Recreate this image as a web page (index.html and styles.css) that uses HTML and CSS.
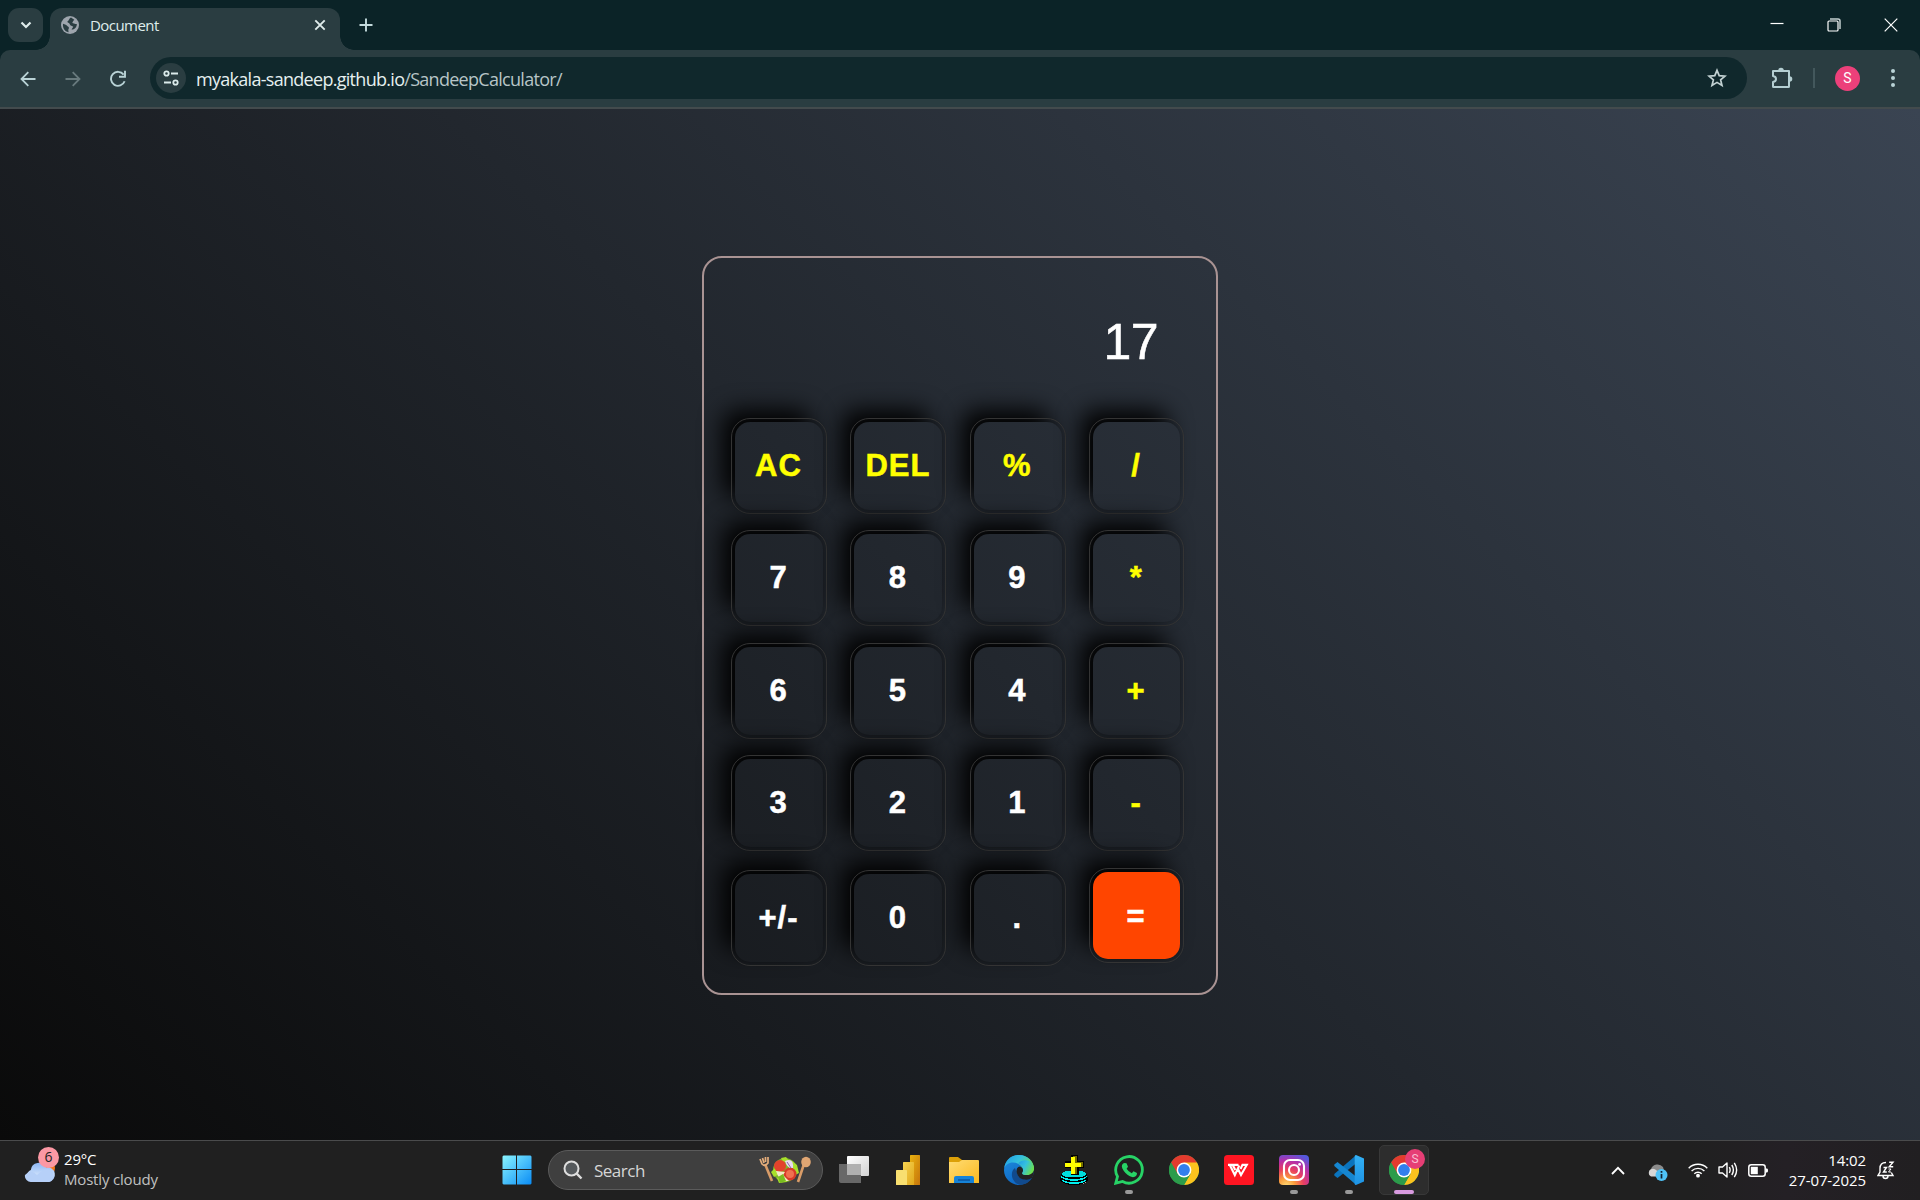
FILE: index.html
```html
<!DOCTYPE html>
<html lang="en">
<head>
<meta charset="utf-8">
<title>Document</title>
<link rel="stylesheet" href="styles.css">
</head>
<body>
<svg class="defs" width="0" height="0">
  <defs>
    <linearGradient id="win" x1="0" y1="0" x2="1" y2="1"><stop offset="0" stop-color="#8af5ff"/><stop offset="1" stop-color="#0a8cf5"/></linearGradient>
    <linearGradient id="edgeA" x1="0" y1="0" x2="1" y2=".5"><stop offset="0" stop-color="#1f9be8"/><stop offset=".5" stop-color="#35c1dd"/><stop offset="1" stop-color="#6be04e"/></linearGradient>
    <linearGradient id="edgeB" x1="0" y1="0" x2=".6" y2="1"><stop offset="0" stop-color="#1f8fe0"/><stop offset="1" stop-color="#0c62c0"/></linearGradient>
    <linearGradient id="fold" x1="0" y1="0" x2="1" y2="1"><stop offset="0" stop-color="#ffdc74"/><stop offset="1" stop-color="#fbb91f"/></linearGradient>
    <linearGradient id="cloud" x1="0" y1="0" x2="0" y2="1"><stop offset="0" stop-color="#8db6f4"/><stop offset=".6" stop-color="#c9defb"/><stop offset="1" stop-color="#94b4ee"/></linearGradient>
    <linearGradient id="vs" x1="0" y1="0" x2="0" y2="1"><stop offset="0" stop-color="#33b1f5"/><stop offset="1" stop-color="#1e93e4"/></linearGradient>
    <linearGradient id="pb1" x1="0" y1="0" x2="1" y2="1"><stop offset="0" stop-color="#eab310"/><stop offset="1" stop-color="#c4730c"/></linearGradient>
    <linearGradient id="pb2" x1="0" y1="0" x2="1" y2="1"><stop offset="0" stop-color="#f6d351"/><stop offset="1" stop-color="#e0a81b"/></linearGradient>
    <linearGradient id="tv" x1="0" y1="0" x2="1" y2="1"><stop offset="0" stop-color="#fff"/><stop offset="1" stop-color="#d2d2d2"/></linearGradient>
    <radialGradient id="ig" cx=".25" cy="1.05" r="1.15"><stop offset="0" stop-color="#ffe07a"/><stop offset=".25" stop-color="#fb9c3c"/><stop offset=".5" stop-color="#e9405f"/><stop offset=".75" stop-color="#b72fa8"/><stop offset="1" stop-color="#5558dc"/></radialGradient>
    <symbol id="chrome" viewBox="0 0 30 30">
      <circle cx="15" cy="15" r="15" fill="#2c9c4b"/>
      <path d="M15 15 2 7.500A15 15 0 0 1 28 7.500Z" fill="#e33b2e"/>
      <path d="M15 7.500H28A15 15 0 0 1 15 30L21.500 18.800Z" fill="#fcc31e"/>
      <path d="M2 7.500 8.500 18.800 15 14 15 7.500Z" fill="#e33b2e"/>
      <path d="M2 7.500 8.500 18.800 15 22.500 15 30A15 15 0 0 1 2 7.500Z" fill="#2c9c4b"/>
      <path d="M8.500 18.700 15 22.500 21.500 18.700 15 30Z" fill="#2c9c4b"/>
      <circle cx="15" cy="15" r="7.400" fill="#fff"/><circle cx="15" cy="15" r="5.900" fill="#327fee"/>
    </symbol>
  </defs>
</svg>

<div class="tabstrip">
  <div class="tab-search"><svg width="12" height="12" viewBox="0 0 12 12"><path d="M1.500 3.500 6 8 10.500 3.500" fill="none" stroke="#dfeceb" stroke-width="2.200"/></svg></div>
  <div class="tab">
    <svg width="18" height="18" viewBox="0 0 18 18"><circle cx="9" cy="9" r="9" fill="#9ea5ad"/><path d="M10 1.500C7.500 3 8.300 4.500 6.500 5.300 6 7 8.500 6.700 8.800 8.200 9 10 11.500 9.500 12.300 10.800L10.500 13.500C13.500 14 16 11 15.800 8 14.500 8.400 13.800 7.500 12 7.300 10.500 6.500 12.600 4.700 13.300 3.700Z M2 7.700C3.800 8.700 6 8.700 6.500 10.300 7.800 11 8.500 12 7.500 13 7 14 7.600 15.500 7.600 16.200 3.500 15.500 1.500 11.500 2 7.700Z" fill="#2a3d41"/></svg>
    <span class="tab-title">Document</span>
    <svg width="12" height="12" viewBox="0 0 12 12"><path d="M1.300 1.300 10.700 10.700M10.700 1.300 1.300 10.700" stroke="#dfeceb" stroke-width="1.900"/></svg>
  </div>
  <svg class="new-tab" width="14" height="14" viewBox="0 0 14 14"><path d="M7 .5V13.500M.5 7H13.500" stroke="#c3dadc" stroke-width="1.900"/></svg>
  <div class="window-buttons">
    <svg width="14" height="14" viewBox="0 0 14 14"><path d="M.5 5.500H13.500" stroke="#fff" stroke-width="1.200"/></svg>
    <svg width="14" height="14" viewBox="0 0 14 14"><path d="M3 1H11Q13 1 13 3V11" fill="none" stroke="#c4cfd0" stroke-width="1.500"/><rect x="1" y="3" width="10" height="10" rx="1" fill="none" stroke="#fff" stroke-width="1.200"/></svg>
    <svg width="14" height="14" viewBox="0 0 14 14"><path d="M.7.700 13.300 13.300M13.300.700.700 13.300" stroke="#fff" stroke-width="1.200"/></svg>
  </div>
</div>

<div class="toolbar">
  <div class="nav">
    <svg width="16" height="16" viewBox="0 0 16 16"><path d="M15.500 8H1.800M8.300 1.200 1.500 8 8.300 14.800" fill="none" stroke="#b9d3d6" stroke-width="1.800"/></svg>
    <svg width="16" height="16" viewBox="0 0 16 16"><path d="M.5 8H14.200M7.700 1.200 14.500 8 7.700 14.800" fill="none" stroke="#687a7d" stroke-width="1.800"/></svg>
    <svg width="16" height="18" viewBox="0 0 16 18"><path d="M14.600 11.200A7 7 0 1 1 13.600 4.600" fill="none" stroke="#b9d3d6" stroke-width="1.900"/><path d="M15 .8V6.800H9" fill="none" stroke="#b9d3d6" stroke-width="1.900"/></svg>
  </div>
  <div class="omnibox">
    <div class="site-info"><svg width="16" height="16" viewBox="0 0 16 16"><g fill="none" stroke="#dcebeb" stroke-width="1.800"><circle cx="3.500" cy="3.500" r="2.200"/><path d="M8 3.500H15M1 12.500H8"/><circle cx="12.500" cy="12.500" r="2.200"/></g></svg></div>
    <span class="url">myakala-sandeep.github.io<span class="path">/SandeepCalculator/</span></span>
    <svg width="20" height="20" viewBox="0 0 20 20"><path d="M10 2.300 12.200 7.600 18 8.100 13.600 11.800 15 17.500 10 14.400 5 17.500 6.400 11.800 2 8.100 7.800 7.600Z" fill="none" stroke="#c3d2d3" stroke-width="1.700"/></svg>
  </div>
  <svg class="puzzle" width="22" height="22" viewBox="0 0 22 22"><path d="M2 4H18V19.500Q18 20 17.500 20H2.500Q2 20 2 19.500V15Q5 14.500 5 12T2 9Z" fill="none" stroke="#b5cfd2" stroke-width="2" stroke-linejoin="round"/><path d="M7.200 3.500A2.800 2.800 0 0 1 12.800 3.500ZM18.500 9.200A2.800 2.800 0 0 1 18.500 14.800Z" fill="#b5cfd2"/></svg>
  <div class="divider"></div>
  <div class="avatar">S</div>
  <svg width="6" height="20" viewBox="0 0 6 20"><g fill="#b9d3d6"><circle cx="3" cy="3" r="2"/><circle cx="3" cy="10" r="2"/><circle cx="3" cy="17" r="2"/></g></svg>
</div>

<main class="page">
  <div class="calculator">
    <div class="display">17</div>
    <div class="keys">
      <button class="key operator">AC</button><button class="key operator">DEL</button><button class="key operator">%</button><button class="key operator">/</button>
      <button class="key">7</button><button class="key">8</button><button class="key">9</button><button class="key operator">*</button>
      <button class="key">6</button><button class="key">5</button><button class="key">4</button><button class="key operator">+</button>
      <button class="key">3</button><button class="key">2</button><button class="key">1</button><button class="key operator">-</button>
      <button class="key">+/-</button><button class="key">0</button><button class="key">.</button><button class="key equals">=</button>
    </div>
  </div>
</main>

<footer class="taskbar">
  <div class="weather">
    <div class="weather-icon">
      <svg width="36" height="38" viewBox="0 0 36 38"><circle cx="23" cy="21" r="8" fill="#f5791d"/><path d="M7.500 35A6.500 6.500 0 0 1 6.800 23 8 8 0 0 1 22 20.500 7 7 0 0 1 25 35Z" fill="url(#cloud)"/><path d="M1 28Q7 21 13 28 20 20 27 23.500A6.500 6.500 0 0 1 25 35H7.500A6 6 0 0 1 1 28Z" fill="#b6d0f8"/></svg>
      <span class="badge-count">6</span>
    </div>
    <div class="weather-text"><span>29°C</span><span class="muted">Mostly cloudy</span></div>
  </div>

  <svg class="start" width="30" height="30" viewBox="0 0 30 30"><path d="M1.500.5H14V14H.5V1.500ZM15 .5H28.500L29.500 1.500V14H15ZM.5 15H14V29.500H1.500L.5 28.500ZM15 15H29.500V28.500L28.500 29.500H15Z" fill="url(#win)"/></svg>

  <div class="search">
    <svg width="20" height="20" viewBox="0 0 20 20"><circle cx="8.500" cy="8.500" r="7" fill="#55595c" stroke="#dedede" stroke-width="2"/><path d="M13.700 13.700 18.500 18.500" stroke="#dedede" stroke-width="2.400"/></svg>
    <span>Search</span>
    <svg width="52" height="28" viewBox="0 0 52 28">
      <path d="M6 8 13 25" stroke="#d99c68" stroke-width="2.600"/><path d="M1 3 3 8Q6 11 9 7L9 1M3.500 2 5 7M6.500 1V6" fill="none" stroke="#e5ae7c" stroke-width="1.700"/>
      <path d="M45 8 39 26" stroke="#d99c68" stroke-width="2.600"/><ellipse cx="47" cy="6" rx="4.800" ry="5.300" fill="#e0a673"/>
      <circle cx="26" cy="14" r="12" fill="#7fb52b"/><path d="M12 16 17 11 20 18 15 21ZM22 2 27 1 31 6 24 6ZM33 5 38 9 40 17 34 20ZM18 22 24 18 28 26 20 27Z" fill="#a8e02b"/>
      <circle cx="21" cy="10" r="6" fill="#e3422c"/><circle cx="31" cy="18" r="6.500" fill="#d93a29"/><circle cx="31" cy="18" r="4" fill="#f07050"/><path d="M26 5Q35 1 34 12 28 13 26 5Z" fill="#e9d8ef"/><path d="M28 6 32 12" stroke="#8c62a3"/><path d="M17 15 26 16 24 19 30 25 25 25 19 20Z" fill="#f1eac4"/><path d="M19 21 24 18 27 25 21 27Z" fill="#79bd20"/>
    </svg>
  </div>

  <div class="apps">
    <div class="app"><svg width="30" height="30" viewBox="0 0 30 30"><path d="M0 9H8V20H22V28H2Q0 28 0 26Z" fill="#686868"/><path d="M9 1H29Q30 1 30 2V20Q30 21 29 21H22V9H8V2Q8 1 9 1Z" fill="url(#tv)"/><path d="M8 9H22V20H8Z" fill="#b0b0b0"/></svg></div>
    <div class="app"><svg width="30" height="30" viewBox="0 0 30 30"><rect x="16" width="10" height="30" rx=".6" fill="url(#pb1)"/><rect x="9" y="7" width="11" height="23" rx=".6" fill="url(#pb2)"/><rect x="2" y="15" width="11" height="15" rx=".6" fill="#f8df70"/></svg></div>
    <div class="app"><svg width="30" height="30" viewBox="0 0 30 30"><path d="M0 3Q0 2 1 2H9L13 5V10H0Z" fill="#dca008"/><path d="M0 7H10L13 5H29Q30 5 30 6V28H0Z" fill="url(#fold)"/><path d="M5 28V23Q5 21 7 21H23Q25 21 25 23V28Z" fill="#1683d8"/><path d="M9 25H21" stroke="#0b55a0" stroke-width="1.500"/></svg></div>
    <div class="app"><svg width="30" height="30" viewBox="0 0 30 30"><circle cx="15" cy="15" r="15" fill="url(#edgeB)"/><path d="M.3 13C1.500 4 8 0 15 0 24 0 30 6.500 30 13.500 30 18 26 20.500 22.500 20 18 20 17.500 18.500 18.800 17 20.500 12.500 15 7.500 9 7.500 4.500 7.500 1.500 10 .3 13Z" fill="url(#edgeA)"/><path d="M11 13C5 17 8 29 17 29.800 22 29.500 26 26.500 28 23 19 27 13 21 12.500 17Z" fill="#114a8c"/><path d="M28 23Q30 20 30 15L23 20Q17 20 18.800 17 20 13 16 11.500 12 12 12.500 17 14 25 23 24.700 26 24 28 23Z" fill="#222"/><path d="M18.800 17C20.500 12.500 17 9 14 8.500 20 2 30 6 30 13.500 30 18 26 20.500 22.500 20 18 20 17.500 18.500 18.800 17Z" fill="url(#edgeA)"/></svg></div>
    <div class="app"><svg width="30" height="30" viewBox="0 0 30 30" shape-rendering="crispEdges"><ellipse cx="16" cy="24" rx="13.500" ry="6" fill="#aaa"/><ellipse cx="15" cy="24" rx="14" ry="6" fill="#000"/><ellipse cx="15" cy="24.500" rx="12.500" ry="4.500" fill="#0ee"/><ellipse cx="15" cy="22.800" rx="13" ry="4.500" fill="#000"/><ellipse cx="15" cy="21.300" rx="13" ry="4.500" fill="#0ee"/><ellipse cx="15" cy="19.800" rx="13" ry="4.200" fill="#000"/><ellipse cx="15" cy="19" rx="12.500" ry="3.500" fill="#0dd"/><path d="M12 0H19V6H25V13H20V20H12V13H6V6H12Z" fill="#000"/><path d="M14 1H18V7H24V12H18V19H14Z" fill="#776f00"/><path d="M12 2H16V8H22V12H16V19H12V12H6V8H12Z" fill="#ff0"/></svg></div>
    <div class="app running"><svg width="30" height="30" viewBox="0 0 30 30"><path d="M1.800 28.200 3.500 21.500A13.300 13.300 0 1 1 8.600 26.500Z" fill="none" stroke="#27d366" stroke-width="2.800"/><path d="M10.500 8 12.500 8.200 14 11.800 12.600 13.800Q14.500 17 17.800 18.200L19.500 16.300 23 18Q23 22 19 22.200 15.500 22 11.500 18 7 13 8 10Q9 8 10.500 8Z" fill="#27d366"/></svg></div>
    <div class="app"><svg width="30" height="30"><use href="#chrome"/></svg></div>
    <div class="app"><svg width="30" height="30" viewBox="0 0 30 30"><rect width="30" height="30" rx="3.500" fill="#ff1522"/><path d="M4 9.900H14.500M5.800 10 10.800 20 15.300 10.500M13.500 13 17 20 22.800 9.900H18.500L16.500 14M9 10.500 11.300 15" fill="none" stroke="#fff" stroke-width="2.100"/></svg></div>
    <div class="app running"><svg width="30" height="30" viewBox="0 0 30 30"><rect width="30" height="30" rx="4" fill="url(#ig)"/><g fill="none" stroke="#fff" stroke-width="2.100"><rect x="5" y="5" width="20" height="20" rx="6"/><circle cx="15" cy="15" r="5"/></g><circle cx="20.600" cy="9.400" r="1.400" fill="#fff"/></svg></div>
    <div class="app running"><svg width="30" height="30" viewBox="0 0 30 30"><path d="M22 8.500 3.500 23 .3 20.500V19L22 .3Z" fill="#0b74bd"/><path d="M22 21.500 3.500 7 .3 9.500V11L22 29.700Z" fill="#1686d0"/><path d="M22 0 30 3.500V26.500L22 30Q20.700 30 20.700 28.500V1.500Q20.700 0 22 0Z" fill="url(#vs)"/></svg></div>
    <div class="app active"><svg width="30" height="30"><use href="#chrome"/></svg><span class="profile">S</span></div>
  </div>

  <div class="tray">
    <svg class="chevron" width="14" height="9" viewBox="0 0 14 9"><path d="M1 8 7 1.800 13 8" fill="none" stroke="#fff" stroke-width="1.800"/></svg>
    <svg class="onedrive" width="21" height="20" viewBox="0 0 21 20"><path d="M4 14A4 4 0 0 1 4 7 7 7 0 0 1 16 5L18 12Z" fill="#8b8b8b"/><path d="M4 14.500A4 4 0 0 1 4 7.300Q9 5 14 14.500Z" fill="#d7d7d7"/><circle cx="14.500" cy="13" r="6" fill="#4fc3f8"/><path d="M14.500 12V16.500M14.500 9V10.700" stroke="#123" stroke-width="1.700"/></svg>
    <svg class="wifi" width="20" height="16" viewBox="0 0 20 16"><g fill="none" stroke="#fff" stroke-width="1.400"><path d="M.7 6.200A13 13 0 0 1 19.300 6.200M3.600 9A9 9 0 0 1 16.400 9M6.300 11.800A5.200 5.200 0 0 1 13.700 11.800"/></g><circle cx="10" cy="13.700" r="1.900" fill="#fff"/></svg>
    <svg class="volume" width="20" height="18" viewBox="0 0 20 18"><g fill="none" stroke="#fff" stroke-width="1.400"><path d="M1 6V12H4.500L9 16V2L4.500 6Z" stroke-linejoin="round"/><path d="M11.300 6.200Q13 9 11.300 11.800M13.800 4Q17 9 13.800 14M16.300 1.800Q21 9 16.300 16.200"/></g></svg>
    <svg class="battery" width="20" height="13" viewBox="0 0 20 13"><rect x=".8" y=".8" width="16.400" height="11.400" rx="2.500" fill="none" stroke="#fff" stroke-width="1.500"/><rect x="2.800" y="2.800" width="7" height="7.400" fill="#fff"/><path d="M18 4.500H19Q20 4.500 20 6.500T19 8.500H18Z" fill="#fff"/></svg>
    <div class="clock"><span>14:02</span><span>27-07-2025</span></div>
    <svg width="18" height="19" viewBox="0 0 18 19"><path d="M9 1.500Q3 1.500 3 7.500V11L1 14.500H16L14.300 11.500M6 15Q6 17.500 8.500 17.500T11 15" fill="none" stroke="#fff" stroke-width="1.400"/><path d="M6.500 6.500H9.500L6.500 11H9.800M12.200 1.200H16L12.200 5.800H16.200" fill="none" stroke="#fff" stroke-width="1.400"/><path d="M11.500 8H14L11.500 11H14" fill="none" stroke="#fff"/></svg>
  </div>
</footer>
</body>
</html>
```
FILE: styles.css
```css
* { box-sizing: border-box; }
body {
  margin: 0;
  width: 1920px;
  height: 1200px;
  overflow: hidden;
  display: flex;
  flex-direction: column;
  background: #0b2327;
  font-family: "Open Sans", "Noto Sans", sans-serif;
  color: #fff;
}
svg { display: block; flex: none; }
.defs { position: absolute; }

/* Tab strip */
.tabstrip { height: 50px; display: flex; align-items: flex-start; padding: 8px 22px 0 8px; background: #0b2327; }
.tab-search { width: 35px; height: 34px; border-radius: 11px; background: #2a3d41; display: flex; align-items: center; justify-content: center; }
.tab { position: relative; width: 290px; height: 42px; margin-left: 7px; padding: 0 14px 8px 11px; display: flex; align-items: center; background: #2a3d41; border-radius: 12px 12px 0 0; }
.tab::before, .tab::after { content: ""; position: absolute; bottom: 0; width: 14px; height: 14px; }
.tab::before { right: 100%; background: radial-gradient(circle at 0 0, transparent 13.500px, #2a3d41 14px); }
.tab::after { left: 100%; background: radial-gradient(circle at 100% 0, transparent 13.500px, #2a3d41 14px); }
.tab-title { margin-left: 11px; flex: 1; font-size: 15px; line-height: 20px; letter-spacing: -.55px; color: #dfeceb; }
.new-tab { margin: 10px 0 0 19px; }
.window-buttons { margin-left: auto; display: flex; gap: 43px; padding-top: 10px; }

/* Toolbar */
.toolbar { height: 59px; flex: none; display: flex; align-items: center; padding: 0 24px 1px 20px; background: #2a3d41; border-bottom: 2px solid #434b4d; border-radius: 10px 10px 0 0; }
.nav { display: flex; align-items: center; gap: 29px; width: 130px; padding-top: 1px; }
.omnibox { width: 1597px; height: 42px; border-radius: 21px; background: #10282c; display: flex; align-items: center; padding: 0 20px 0 6px; }
.site-info { width: 30px; height: 30px; border-radius: 50%; background: #2a3d41; display: flex; align-items: center; justify-content: center; }
.url { flex: 1; margin-left: 10px; padding-top: 1px; font-size: 18px; letter-spacing: -.71px; color: #e6f0f0; }
.path { color: #b7c5c7; }
.puzzle { margin-left: 24px; }
.divider { width: 2px; height: 20px; margin-left: 20px; background: #43585c; }
.avatar { width: 25px; height: 25px; margin: 0 30px 0 20px; border-radius: 50%; background: #ec407a; font: 14px/25px Roboto, sans-serif; text-align: center; }

/* Calculator */
.page { height: 1031px; flex: none; padding-top: 147px; display: flex; justify-content: center; align-items: flex-start; background: linear-gradient(45deg, #0a0a0a, #3a4452); }
.calculator { width: 516px; height: 739px; padding: 48px 31px 0; border: 2px solid #a99393; border-radius: 20px; }
.display { height: 116px; padding: 8px 27px 0 0; font: 50px/57px "Liberation Sans", sans-serif; letter-spacing: -.5px; text-align: right; -webkit-text-stroke: .5px #fff; }
.keys { display: grid; grid-template-columns: repeat(4, 119.400px); grid-template-rows: 112px 113px 112px 115px 87px; align-items: start; }
.key { width: 88px; height: 88px; padding: 0 1px 0 0; border: 0; border-radius: 15px; background: transparent; color: #fff; font: bold 31px "Liberation Sans", sans-serif; letter-spacing: 1px; -webkit-text-stroke: .5px currentColor; outline: 1px solid #343434; outline-offset: 3px; box-shadow: -12px -12px 23px #000, 0 0 5px rgba(0, 0, 0, .2); }
.key:nth-child(4n) { width: 87px; }
.operator { color: #ff0; }
.equals { height: 87px; margin-top: -2px; padding-top: 2px; background: #ff4500; }

/* Taskbar */
.taskbar { height: 60px; flex: none; display: flex; align-items: center; padding-bottom: 1px; border-top: 1px solid #4a4b4c; background: linear-gradient(90deg, #202020 88%, #242025 93%, #211f21); font-size: 15px; }
.weather { width: 503px; display: flex; align-items: center; padding: 0 0 8px 24px; }
.weather-icon { position: relative; }
.badge-count { position: absolute; left: 14px; top: 0; width: 21px; height: 21px; border-radius: 50%; background: #fb98a4; font-size: 14px; line-height: 20px; text-align: center; color: #222; }
.weather-text, .clock { display: flex; flex-direction: column; line-height: 20px; }
.weather-text { padding: 6px 0 0 4px; letter-spacing: -.18px; }
.muted { color: #c0c0c0; }
.start { margin-left: -1px; }
.search { width: 275px; height: 40px; margin-left: 16px; padding: 0 11px 0 14px; border: 1px solid #5b5b5b; border-radius: 20px; background: #3f3f3f; display: flex; align-items: center; color: #d6d6d6; font-size: 17px; letter-spacing: -.5px; }
.search span { flex: 1; margin-left: 11px; }
.apps { display: flex; margin-left: 6px; gap: 5px; }
.app { position: relative; width: 50px; height: 50px; border-radius: 5px; display: flex; align-items: center; justify-content: center; }
.running::after, .active::after { content: ""; position: absolute; bottom: 1px; left: 21px; width: 8px; height: 4px; border-radius: 2px; background: #999; }
.active { background: #2d2d2d; border: 1px solid #383838; }
.active::after { left: 14px; width: 20px; bottom: 0; background: #d99be0; }
.profile { position: absolute; right: 3px; top: 3px; width: 20px; height: 20px; border-radius: 50%; background: #e63e75; font: 12px/20px Roboto, sans-serif; text-align: center; color: #f8bfd2; }
.tray { flex: 1; display: flex; align-items: center; justify-content: flex-end; padding-right: 25px; }
.onedrive { margin: 3px 0 0 22px; }
.wifi { margin-left: 20px; }
.volume { margin-left: 10px; }
.battery { margin-left: 10px; }
.clock { width: 98px; text-align: right; margin-right: 11px; letter-spacing: -.1px; font-size: 15px; }
```
